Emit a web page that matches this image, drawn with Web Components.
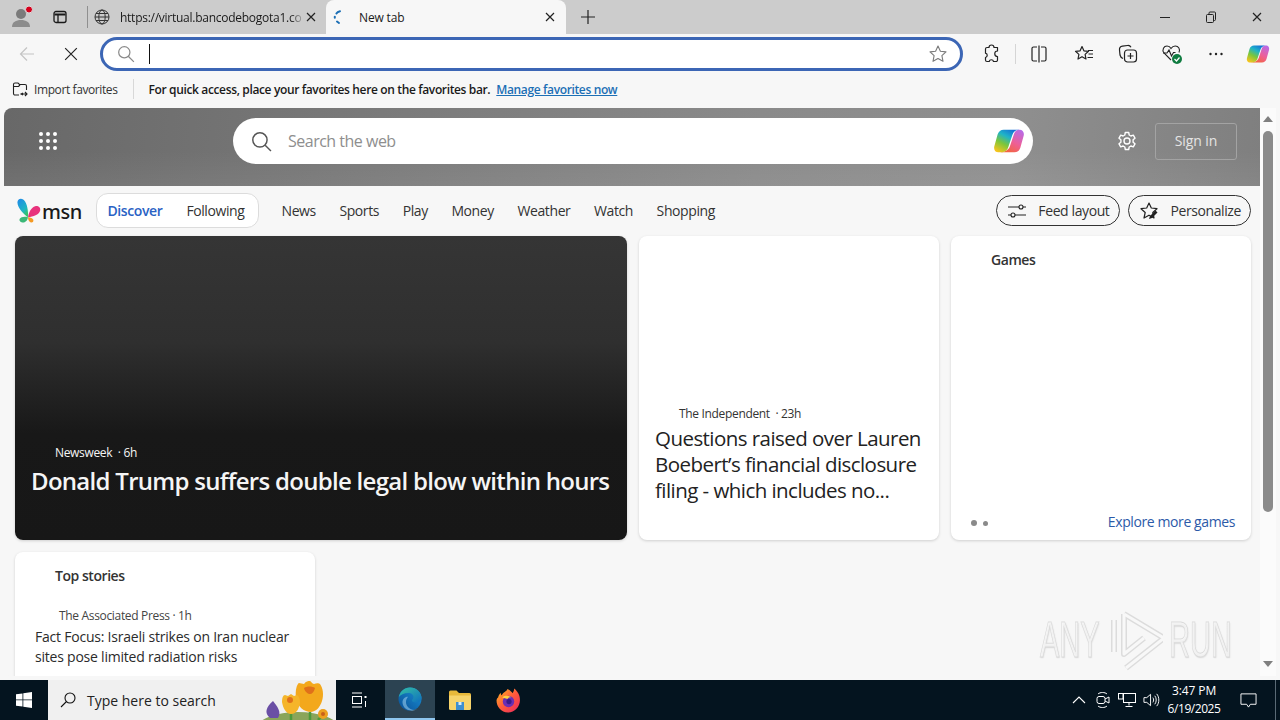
<!DOCTYPE html>
<html lang="en">
<head>
<meta charset="utf-8">
<title>New tab</title>
<style>
  html, body { margin: 0; height: 100%; overflow: hidden; background: #f7f7f7; }
  body { font-family: "Open Sans", "Noto Sans", sans-serif; display: flex; flex-direction: column; width: 1280px; height: 720px; position: relative; }
</style>
</head>
<body>
<browser-tabs></browser-tabs>
<browser-toolbar></browser-toolbar>
<browser-favbar></browser-favbar>
<page-view>
  <msn-header></msn-header>
  <msn-nav></msn-nav>
  <msn-feed></msn-feed>
</page-view>
<win-taskbar></win-taskbar>
<run-watermark></run-watermark>

<script>
const COPILOT = `
  <defs>
    <linearGradient id="c1" x1=".8" y1="0" x2=".2" y2="1"><stop offset="0" stop-color="#1368d8"/><stop offset=".35" stop-color="#1fb4c8"/><stop offset=".65" stop-color="#7cc63a"/><stop offset="1" stop-color="#f6c41e"/></linearGradient>
    <linearGradient id="c2" x1=".8" y1="0" x2=".2" y2="1"><stop offset="0" stop-color="#b96ae6"/><stop offset=".5" stop-color="#ee5f96"/><stop offset="1" stop-color="#f4662e"/></linearGradient>
  </defs>
  <path fill="url(#c2)" d="M20 3.500C22.200 3.500 23.700 5.500 23 8L20.500 17C19.800 19.200 18.200 20.500 16 20.500H4C7.500 20.500 11 19.500 12.500 16.500L15.500 7.500C16.300 5 17.500 3.500 20 3.500z"/>
  <path fill="url(#c1)" d="M8 3.500H20C18 3.500 15.500 4.500 14.500 7.500L11.500 16.500C10.800 19 8.500 20.500 6 20.500H4C1.800 20.500 .3 18.500 1 16L3.500 7C4.200 4.800 5.800 3.500 8 3.500z"/>`;

const ICONS = {
  profile: `<svg viewBox="0 0 24 24" width="24" height="24"><circle cx="11" cy="9" r="5" fill="#7b7b7b"/><path d="M2 22c0-5 4-7 9-7s9 2 9 7z" fill="#8c8c8c"/><circle cx="19" cy="4.500" r="3.500" fill="#d6001c" stroke="#ddd" stroke-width="1"/></svg>`,
  tabs: `<svg viewBox="0 0 16 16" width="16" height="16" fill="none" stroke="#1a1a1a" stroke-width="1.300"><rect x="2" y="2.500" width="12" height="11" rx="2"/><path d="M2.500 5.500h11" stroke-width="2"/><path d="M6 6v7"/></svg>`,
  globe: `<svg viewBox="0 0 16 16" width="16" height="16" fill="none" stroke="#333" stroke-width="1"><circle cx="8" cy="8" r="7"/><ellipse cx="8" cy="8" rx="3.200" ry="7"/><path d="M1 8h14M2 4.500h12M2 11.500h12"/></svg>`,
  close: `<svg viewBox="0 0 12 12" width="12" height="12" fill="none" stroke="#222" stroke-width="1.200"><path d="M2 2l8 8M10 2l-8 8"/></svg>`,
  spinner: `<svg viewBox="0 0 16 16" width="16" height="16" fill="none" stroke="#1c6fb5" stroke-width="2" stroke-linecap="round"><path d="M10 2.200C8 2.600 7 3.400 6.400 4.400"/><path d="M4.800 7.800v1"/><path d="M7 12.500l2 1.500"/></svg>`,
  plus: `<svg viewBox="0 0 16 16" width="16" height="16" fill="none" stroke="#222" stroke-width="1.200"><path d="M8 1v14M1 8h14"/></svg>`,
  min: `<svg viewBox="0 0 12 12" width="12" height="12" fill="none" stroke="#222"><path d="M1 6.500h10"/></svg>`,
  restore: `<svg viewBox="0 0 12 12" width="12" height="12" fill="none" stroke="#222"><rect x="1.500" y="3.500" width="7" height="8" rx="1"/><path d="M4 3.500V2a1 1 0 0 1 1-1h4.500a1 1 0 0 1 1 1v6.500a1 1 0 0 1-1 1h-1"/></svg>`,
  back: `<svg viewBox="0 0 16 16" width="16" height="16" fill="none" stroke="#c4c4c4" stroke-width="1.200"><path d="M15 8H1.500M8 1.500L1.500 8 8 14.500"/></svg>`,
  stop: `<svg viewBox="0 0 12 12" width="14" height="14" fill="none" stroke="#222" stroke-width="1"><path d="M1 1l10 10M11 1L1 11"/></svg>`,
  search: `<svg viewBox="0 0 16 16" width="18" height="18" fill="none" stroke="#8a8a8a" stroke-width="1.100"><circle cx="6.500" cy="6.500" r="5"/><path d="M10 10l5 5"/></svg>`,
  star: `<svg viewBox="0 0 20 20" width="20" height="20" fill="none" stroke="#7a7a7a" stroke-width="1.100" stroke-linejoin="round"><path d="M10 2l2.400 5.200 5.600.7-4.100 3.800 1.100 5.600L10 14.500l-5 2.800 1.100-5.600L2 7.900l5.600-.7z"/></svg>`,
  puzzle: `<svg viewBox="0 0 20 20" width="20" height="20" fill="none" stroke="#222" stroke-width="1.200" stroke-linejoin="round"><path d="M7 3.500a2.500 2.500 0 0 1 5 0h3.500V7a2.500 2.500 0 0 0 0 5.500V16a1.500 1.500 0 0 1-1.500 1.500h-2.500a2.200 2.200 0 0 0-4.300 0H5A1.500 1.500 0 0 1 3.500 16v-2.500a2.200 2.200 0 0 0 0-4.300V5A1.500 1.500 0 0 1 5 3.500z"/></svg>`,
  split: `<svg viewBox="0 0 20 20" width="20" height="20" fill="none" stroke="#222" stroke-width="1.200"><path d="M8 3H4.500A1.500 1.500 0 0 0 3 4.500v11A1.500 1.500 0 0 0 4.500 17H8M12 3h3.500A1.500 1.500 0 0 1 17 4.500v11a1.500 1.500 0 0 1-1.500 1.500H12M10 1.500v17"/></svg>`,
  favs: `<svg viewBox="0 0 20 20" width="20" height="20" fill="none" stroke="#222" stroke-width="1.200" stroke-linejoin="round"><path d="M8 2.500l1.900 4.300 4.600.5-3.400 3.100.9 4.600L8 12.700 4 15l.9-4.600L1.500 7.300l4.600-.5zM14 6.500h5M14.500 10h4.500M13.500 13.500h5.500"/></svg>`,
  collections: `<svg viewBox="0 0 20 20" width="20" height="20" fill="none" stroke="#222" stroke-width="1.200"><path d="M5 14.500c-1.500-.5-2.500-1.500-3-3.500L1.500 6C1.300 4 2.500 2.500 4.500 2.200l5-.7c1.500-.2 2.800.5 3.500 1.800"/><rect x="6.500" y="6" width="12" height="12" rx="3"/><path d="M12.500 9v6M9.500 12h6"/></svg>`,
  health: `<svg viewBox="0 0 22 22" width="22" height="22" fill="none" stroke="#222" stroke-width="1.100"><path d="M10 17L3 10C.5 6.500 3 3 6 3c2 0 3.200 1 4 2.500C11 4 12.200 3 14.200 3 17.500 3 19.500 6 18 9.500"/><path d="M2 10h4l2-3 2.500 6 2-3.500h2"/><circle cx="16" cy="16" r="5" fill="#107c41" stroke="none"/><path d="M13.500 16l2 2 3-3.500" stroke="#fff" stroke-width="1.200"/></svg>`,
  more: `<svg viewBox="0 0 16 16" width="16" height="16" fill="#222"><circle cx="2.500" cy="8" r="1.200"/><circle cx="8" cy="8" r="1.200"/><circle cx="13.500" cy="8" r="1.200"/></svg>`,
  copilot: `<svg viewBox="0 0 24 24" width="24" height="24">${COPILOT}</svg>`,
  copilotBig: `<svg viewBox="0 0 24 24" width="32" height="32">${COPILOT}</svg>`,
  imports: `<svg viewBox="0 0 16 16" width="16" height="16" fill="none" stroke="#222" stroke-width="1.100"><path d="M7 14H3a1.500 1.500 0 0 1-1.500-1.500v-9A1.500 1.500 0 0 1 3 2h3l1.500 1.500H13A1.500 1.500 0 0 1 14.500 5v4"/><path d="M1.500 5.500h5L8 4M9 13h6M13 11l2 2-2 2M11 12l-2 1 2 1"/></svg>`,
  apps: `<svg viewBox="0 0 20 20" width="20" height="20" fill="#fff"><circle cx="3" cy="3" r="2"/><circle cx="10" cy="3" r="2"/><circle cx="17" cy="3" r="2"/><circle cx="3" cy="10" r="2"/><circle cx="10" cy="10" r="2"/><circle cx="17" cy="10" r="2"/><circle cx="3" cy="17" r="2"/><circle cx="10" cy="17" r="2"/><circle cx="17" cy="17" r="2"/></svg>`,
  bigsearch: `<svg viewBox="0 0 20 20" width="21" height="21" fill="none" stroke="#555" stroke-width="1.400"><circle cx="8.500" cy="8.500" r="6.800"/><path d="M13.500 13.500l5.500 5.500"/></svg>`,
  gear: `<svg viewBox="0 0 20 20" width="20" height="20" fill="none" stroke="#fff" stroke-width="1.400" stroke-linejoin="round"><circle cx="10" cy="10" r="3"/><path d="M8.300 1.500h3.400l.5 2.500 1.700 1 2.400-.8 1.700 3-1.900 1.600v2.400l1.900 1.600-1.700 3-2.400-.8-1.700 1-.5 2.500H8.300l-.5-2.500-1.700-1-2.400.8-1.700-3 1.900-1.600V8.800L2 7.200l1.700-3 2.400.8 1.700-1z"/></svg>`,
  sliders: `<svg viewBox="0 0 20 20" width="20" height="20" fill="none" stroke="#222" stroke-width="1.100"><path d="M1 6h11M16 6h3M1 14h3M8 14h11"/><circle cx="14" cy="6" r="2"/><circle cx="6" cy="14" r="2"/></svg>`,
  personalize: `<svg viewBox="0 0 20 20" width="20" height="20" fill="none" stroke="#222" stroke-width="1.200" stroke-linejoin="round"><path d="M10 2l2.300 5 5.700.7-4.200 3.800 1.200 5.500-5-2.800-5 2.800 1.200-5.500L2 7.700 7.700 7z"/><path d="M10 18l1-3 5.500-5.500 2 2L13 17z" fill="#222" stroke="none"/></svg>`,
  msn: `<svg viewBox="0 0 26 26" width="25" height="25"><defs><linearGradient id="m1" x1="0" y1="0" x2=".6" y2="1"><stop offset="0" stop-color="#1f86ea"/><stop offset=".7" stop-color="#1fb5c4"/><stop offset="1" stop-color="#35c46a"/></linearGradient></defs><path d="M12.500 20C8 17 2 11 1.500 5 1.200 1.500 4.500-.5 7.500 1.500c3.500 2.500 5.500 10 5 18.500z" fill="url(#m1)"/><path d="M12.500 20c.5-5 3.500-10.500 7.500-11.500 3.500-.8 6 1.800 5 5-1.200 3.800-7 6-12.500 6.500z" fill="#e8327c"/><path d="M12.500 20C9 19 5 19.500 3.800 21.800 3 24 5 25.500 7.500 25.500c2.500 0 4.500-2.500 5-5.500z" fill="#3cb878"/><path d="M12.500 20c0 2.500 1 5 3 5.500 1.800.4 3-1.200 2.500-2.800-.6-1.800-3-2.500-5.500-2.700z" fill="#f59a23"/></svg>`,
  win: `<svg viewBox="0 0 16 16" width="16" height="16" fill="#fff"><path d="M0 2.300l6.500-.9v6.100H0zM7.300 1.300L16 0v7.500H7.300zM0 8.300h6.500v6.200L0 13.700zM7.300 8.300H16V16l-8.700-1.200z"/></svg>`,
  lens: `<svg viewBox="0 0 16 16" width="16" height="16" fill="none" stroke="#111" stroke-width="1.100"><circle cx="10" cy="6" r="5"/><path d="M6.500 9.500L1 15"/></svg>`,
  taskview: `<svg viewBox="0 0 16 16" width="16" height="16" fill="none" stroke="#fff" stroke-width="1"><path d="M1 1h10M1 15h10"/><rect x="1.500" y="4.500" width="9" height="7"/><rect x="13.500" y="4" width="2" height="2" fill="#fff" stroke="none"/><path d="M14.500 9v6"/></svg>`,
  edge: `<svg viewBox="0 0 24 24" width="24" height="24"><defs><linearGradient id="e1" x1="0" y1="0" x2="1" y2="1"><stop offset="0" stop-color="#35c1a4"/><stop offset="1" stop-color="#0f6fbf"/></linearGradient><linearGradient id="e2" x1="0" y1="1" x2="1" y2="0"><stop offset="0" stop-color="#0a4f96"/><stop offset="1" stop-color="#1a93d8"/></linearGradient></defs><circle cx="12" cy="12" r="11.500" fill="url(#e2)"/><path d="M.8 10C2 4.500 6.500.5 12 .5c6.500 0 11.500 5 11.500 10.500 0 3-2.500 4.500-5.500 4.500-2.500 0-4-1-4-2 0-1 1.500-1.500 1.500-3.500 0-2.500-2.500-4-5-4-4.500 0-8 2-9.700 4z" fill="url(#e1)"/><path d="M11 23.300c-4-1-6.500-4.500-6.500-8 0-3 2-5.500 5.500-5.500-1.500 2-2 3.500-2 5.500 0 3 2.500 6.500 6.500 7.500 3 .5 5-1 5.500-1.500-2 2-5.500 3-8.500 2z" fill="#bfe8ff" opacity=".45"/></svg>`,
  folder: `<svg viewBox="0 0 24 22" width="24" height="22"><path d="M1 3a1.500 1.500 0 0 1 1.500-1.500h6L11 4h10.500A1.500 1.500 0 0 1 23 5.500V7H1z" fill="#e8b93a"/><path d="M1 6.500h22v13a1.500 1.500 0 0 1-1.500 1.500h-19A1.500 1.500 0 0 1 1 19.500z" fill="#f7d46b"/><path d="M8 13h8v8H8z" fill="#3f8fd0"/><path d="M10.500 13h3v3h-3z" fill="#d9edf9"/></svg>`,
  firefox: `<svg viewBox="0 0 24 24" width="25" height="25"><defs><linearGradient id="f1" x1="0" y1="0" x2="1" y2="1"><stop offset="0" stop-color="#ffbb1f"/><stop offset=".5" stop-color="#ff5a3c"/><stop offset="1" stop-color="#e8265f"/></linearGradient></defs><path d="M2 9c.5-2 1.500-3.500 2.500-4.500 0 1.200.4 2 1 2.500C7 4 10 3.500 11 1c3 1.500 4 3 5 4 1-1.500 1.500-3 1.500-4.500 3 2.500 5.500 6 5.500 11 0 6.500-5 12-11.500 12S.5 18 .5 12C.5 11 1.200 9.500 2 9z" fill="url(#f1)"/><circle cx="12" cy="13" r="5.500" fill="#6b2fb3"/><circle cx="12.500" cy="13" r="2.500" fill="#3b1a8a"/><path d="M6 9c3-2.500 7-1.500 9 0-2-.5-3 0-4 1.500z" fill="#ffd23f"/></svg>`,
  flowers: `<svg viewBox="0 0 78 40" width="78" height="40"><ellipse cx="40" cy="47" rx="40" ry="15" fill="#8aa55a"/><path d="M52 32V40M33 34v6M60 40l4-4" stroke="#4d9a3a" stroke-width="2.500" fill="none"/><path d="M12 38C6 33 8 27 15 21c4 5 9 11 5 17z" fill="#6a4fa5"/><path d="M38 18c-1-8 1-14 3-15 1 0 4 1 5 1 2-3 4-3 6-3 1 0 2 3 4 3 2-1 5-1 6 0 3 4 4 11 2 17-2 6-5 10-11 11-7 0-13-5-15-14z" fill="#f3a81c"/><path d="M24 22c0-4 1-7 3-7l3 1 3-2 3 2 3-1c2 1 3 4 3 8-1 5-3 11-9 11-5 0-8-6-9-12z" fill="#f5b52a"/><path d="M46 8c3-2 8-2 11 0-1 4-3 6-5 6s-5-2-6-6z" fill="#e0701a"/><circle cx="32" cy="20" r="3" fill="#e0701a"/><circle cx="65" cy="34" r="5" fill="#eda01e"/><circle cx="65" cy="34" r="2" fill="#c9601a"/></svg>`,
  chevron: `<svg viewBox="0 0 16 16" width="16" height="16" fill="none" stroke="#fff" stroke-width="1.100"><path d="M2 11l6-6 6 6"/></svg>`,
  meet: `<svg viewBox="0 0 16 18" width="16" height="18" fill="none" stroke="#fff" stroke-width="1"><rect x="2" y="5.500" width="8" height="7" rx="2"/><path d="M10 8l4-2v6l-4-2M3 3c2-2 7-2 9 0M3 15c2 2 7 2 9 0"/></svg>`,
  network: `<svg viewBox="0 0 18 16" width="18" height="16" fill="none" stroke="#fff" stroke-width="1"><rect x="5.500" y="1.500" width="12" height="9"/><path d="M11 10.500v3M7.500 14.500h7"/><rect x=".5" y="1.500" width="4.500" height="5.500" fill="#04141f"/></svg>`,
  volume: `<svg viewBox="0 0 18 16" width="17" height="16" fill="none" stroke="#fff" stroke-width="1"><path d="M1 5.500h3L8 2v12l-4-3.500H1zM10.500 5.500c1 1.500 1 3.500 0 5M12.500 3.500c2 2.500 2 6.500 0 9M14.500 1.500c3 3.500 3 9.500 0 13"/></svg>`,
  notify: `<svg viewBox="0 0 18 18" width="17" height="17" fill="none" stroke="#fff" stroke-width="1"><path d="M1 2h16v11h-6l-2 3-2-3H1z"/></svg>`
};

// Icono en línea; el nombre viene del diccionario de arriba
class UiIcon extends HTMLElement {
  connectedCallback() {
    this.attachShadow({ mode: "open" });
    this.shadowRoot.innerHTML = `<style>:host{display:inline-flex;align-items:center;justify-content:center;flex:none}svg{display:block}</style>${ICONS[this.getAttribute("name")] || ""}`;
  }
}
customElements.define("ui-icon", UiIcon);

class ShellElement extends HTMLElement {
  connectedCallback() {
    this.attachShadow({ mode: "open" });
    this.shadowRoot.innerHTML = `<style>${this.css()}</style>${this.html()}`;
  }
}

class BrowserTabs extends ShellElement {
  css() {
    return `
      :host { display: flex; height: 34px; flex: none; background: #cccccc; font-size: 12px; color: #1a1a1a; letter-spacing: -.15px; }
      .btn { display: flex; align-items: center; justify-content: center; }
      .sep { width: 1px; height: 22px; background: #8f8f8f; align-self: center; margin-left: 11px; }
      .tab { display: flex; align-items: center; box-sizing: border-box; }
      .t1 { width: 238px; padding: 0 9px 0 6px; }
      .t1 span { flex: 1; margin-left: 10px; white-space: nowrap; letter-spacing: -.26px; -webkit-mask-image: linear-gradient(90deg,#000 92%,transparent); }
      .t2 { width: 240px; background: #f7f7f7; border-radius: 8px 8px 0 0; padding: 0 10px 0 4px; }
      .t2 span { flex: 1; margin-left: 13px; }
      .controls { margin-left: auto; display: flex; }
      .controls .btn { width: 46px; }
    `;
  }
  html() {
    return `
      <div class="btn" style="width:44px"><ui-icon name="profile"></ui-icon></div>
      <div class="btn" style="width:32px"><ui-icon name="tabs"></ui-icon></div>
      <div class="sep"></div>
      <div class="tab t1"><ui-icon name="globe"></ui-icon><span>https://virtual.bancodebogota1.co</span><ui-icon name="close"></ui-icon></div>
      <div class="tab t2"><ui-icon name="spinner"></ui-icon><span>New tab</span><ui-icon name="close"></ui-icon></div>
      <div class="btn" style="width:44px"><ui-icon name="plus"></ui-icon></div>
      <div class="controls">
        <div class="btn"><ui-icon name="min"></ui-icon></div>
        <div class="btn"><ui-icon name="restore"></ui-icon></div>
        <div class="btn"><ui-icon name="close"></ui-icon></div>
      </div>
    `;
  }
}
customElements.define("browser-tabs", BrowserTabs);

class BrowserToolbar extends ShellElement {
  css() {
    return `
      :host { display: flex; align-items: center; height: 40px; flex: none; background: #f7f7f7; padding-left: 5px; }
      .btn { width: 44px; height: 34px; display: flex; align-items: center; justify-content: center; flex: none; }
      .addr { box-sizing: border-box; width: 863px; height: 34px; margin: 0 7px 0 7px; border: 3px solid #3c66b5; border-radius: 17px; background: #fff; display: flex; align-items: center; padding: 0 12px 0 14px; flex: none; }
      .caret { width: 1px; height: 20px; background: #111; margin-left: 14px; }
      .fill { flex: 1; }
      .sep { width: 1px; height: 20px; background: #d5d5d5; margin: 0 1px; flex: none; }
    `;
  }
  html() {
    return `
      <div class="btn"><ui-icon name="back"></ui-icon></div>
      <div class="btn"><ui-icon name="stop"></ui-icon></div>
      <div class="addr"><ui-icon name="search"></ui-icon><div class="caret"></div><div class="fill"></div><ui-icon name="star"></ui-icon></div>
      <div class="btn"><ui-icon name="puzzle"></ui-icon></div>
      <div class="sep"></div>
      <div class="btn"><ui-icon name="split"></ui-icon></div>
      <div class="btn" style="margin-left:1px"><ui-icon name="favs"></ui-icon></div>
      <div class="btn"><ui-icon name="collections"></ui-icon></div>
      <div class="btn"><ui-icon name="health"></ui-icon></div>
      <div class="btn"><ui-icon name="more"></ui-icon></div>
      <div class="btn" style="width:39px"><ui-icon name="copilot"></ui-icon></div>
    `;
  }
}
customElements.define("browser-toolbar", BrowserToolbar);

class BrowserFavbar extends ShellElement {
  css() {
    return `
      :host { display: flex; align-items: center; height: 34px; box-sizing: border-box; padding: 0 0 4px 12px; flex: none; background: #f7f7f7; font-size: 12px; color: #1a1a1a; letter-spacing: -.4px; white-space: nowrap; }
      .imp { margin-left: 6px; color: #333; }
      .sep { width: 1px; height: 20px; background: #d8d8d8; margin: 0 15px 0 15px; }
      b { font-weight: 600; letter-spacing: -.36px; }
      a { margin-left: 6px; color: #1c6fb5; text-decoration: underline; font-weight: 600; letter-spacing: -.36px; }
    `;
  }
  html() {
    return `
      <ui-icon name="imports"></ui-icon><span class="imp">Import favorites</span><div class="sep"></div>
      <b>For quick access, place your favorites here on the favorites bar.</b><a>Manage favorites now</a>
    `;
  }
}
customElements.define("browser-favbar", BrowserFavbar);

// Marco de la página con su barra de desplazamiento
class PageView extends ShellElement {
  css() {
    return `
      :host { display: flex; height: 568px; flex: none; padding-left: 4px; overflow: hidden; }
      .page { width: 1256px; height: 568px; overflow: hidden; background: #f7f7f7; border-radius: 8px 0 0 8px; flex: none; }
      .bar { width: 16px; background: #fbfbfb; flex: none; display: flex; flex-direction: column; align-items: center; padding: 8px 0 9px; box-sizing: border-box; }
      .up, .down { width: 0; height: 0; border-left: 5px solid transparent; border-right: 5px solid transparent; }
      .up { border-bottom: 6px solid #808080; }
      .down { border-top: 6px solid #808080; margin-top: auto; }
      .thumb { width: 10px; height: 381px; background: #8b8b8b; border-radius: 5px; margin-top: 9px; }
    `;
  }
  html() {
    return `
      <div class="page"><slot></slot></div>
      <div class="bar"><div class="up"></div><div class="thumb"></div><div class="down"></div></div>
    `;
  }
}
customElements.define("page-view", PageView);

class MsnHeader extends ShellElement {
  css() {
    return `
      :host { display: flex; align-items: center; height: 78px; box-sizing: border-box; padding: 0 23px 12px 0;
        background: linear-gradient(180deg, rgba(255,255,255,0) 55%, rgba(255,255,255,.06)), linear-gradient(95deg, #686868 0%, #7a7a7a 30%, #8a8a8a 60%, #8f8f8f 80%, #7f7f7f 100%); font-size: 14px; }
      .apps { width: 229px; padding-left: 34px; box-sizing: border-box; flex: none; display: flex; }
      .search { width: 800px; height: 46px; border-radius: 23px; background: #fff; display: flex; align-items: center; padding: 0 8px 0 18px; box-sizing: border-box; flex: none; }
      .search span { flex: 1; margin-left: 16px; font-size: 16px; color: #8e8e8e; letter-spacing: -.5px; }
      .gear { margin-left: 84px; }
      .sign { margin-left: 18px; width: 83px; height: 37px; box-sizing: border-box; border: 1px solid #a3a3a3; border-radius: 3px; display: flex; align-items: center; justify-content: center; padding-bottom: 2px; color: #e4e4e4; letter-spacing: -.1px; }
    `;
  }
  html() {
    return `
      <div class="apps"><ui-icon name="apps"></ui-icon></div>
      <div class="search"><ui-icon name="bigsearch"></ui-icon><span>Search the web</span><ui-icon name="copilotBig"></ui-icon></div>
      <ui-icon class="gear" name="gear"></ui-icon>
      <div class="sign">Sign in</div>
    `;
  }
}
customElements.define("msn-header", MsnHeader);

class MsnNav extends ShellElement {
  css() {
    return `
      :host { display: flex; align-items: center; height: 50px; box-sizing: border-box; padding: 0 9px 1px 12px; font-size: 14px; color: #333; letter-spacing: -.4px; white-space: nowrap; }
      .logo { display: flex; align-items: center; width: 79.500px; flex: none; box-sizing: border-box; }
      .logo span { font-family: "Noto Sans", sans-serif; font-size: 20px; font-weight: 500; color: #1a1a1a; letter-spacing: -.4px; margin-left: 1px; line-height: 1; padding-top: 3px; }
      .pill { display: flex; align-items: center; gap: 24px; height: 35px; box-sizing: border-box; padding: 0 14px 0 11px; border: 1px solid #dcdcdc; border-radius: 12px; background: #fff; flex: none; }
      .on { color: #2a62c4; font-weight: 600; }
      .links { display: flex; gap: 23.600px; margin-left: 22px; }
      .right { margin-left: auto; display: flex; gap: 8px; }
      .chip { display: flex; align-items: center; height: 31px; box-sizing: border-box; border: 1px solid #333; border-radius: 16px; padding: 0 10px; gap: 11px; }
      .chip:last-child { padding-right: 9px; }
    `;
  }
  html() {
    const links = ["News", "Sports", "Play", "Money", "Weather", "Watch", "Shopping"];
    return `
      <div class="logo"><ui-icon name="msn"></ui-icon><span>msn</span></div>
      <div class="pill"><span class="on">Discover</span><span>Following</span></div>
      <div class="links">${links.map((l) => `<span>${l}</span>`).join("")}</div>
      <div class="right">
        <div class="chip"><ui-icon name="sliders"></ui-icon>Feed layout</div>
        <div class="chip"><ui-icon name="personalize"></ui-icon>Personalize</div>
      </div>
    `;
  }
}
customElements.define("msn-nav", MsnNav);

class MsnFeed extends ShellElement {
  css() {
    return `
      :host { display: grid; grid-template-columns: 612px 300px 300px; grid-auto-rows: 304px; gap: 12px; padding-left: 11px; font-size: 12px; letter-spacing: -.33px; }
      .card { background: #fff; border-radius: 8px; box-shadow: 0 1px 3px rgba(0,0,0,.16); box-sizing: border-box; display: flex; flex-direction: column; color: #333; }
      .hero { background: linear-gradient(180deg, #353535 0%, #2f2f2f 35%, #181818 65%, #171717 100%); color: #f5f5f5; padding: 0 16px 42px; justify-content: flex-end; }
      .hero .src { padding-left: 24px; margin-bottom: 3px; }
      .hero h2 { margin: 0; font-size: 24px; line-height: 34px; font-weight: 600; letter-spacing: -.71px; white-space: nowrap; }
      .story { padding: 0 16px 37px; justify-content: flex-end; }
      .story .src { padding-left: 24px; margin-bottom: 3px; }
      .story h3 { margin: 0; font-size: 20.500px; line-height: 26px; font-weight: 500; letter-spacing: -.55px; color: #222; }
      .games { padding: 14px 16px 9px 20px; justify-content: space-between; }
      .games b { padding-left: 20px; font-size: 14px; font-weight: 600; letter-spacing: -.45px; }
      .foot { display: flex; align-items: center; font-size: 14px; color: #2c5aa8; letter-spacing: -.4px; }
      .dot { width: 6px; height: 6px; border-radius: 50%; background: #8a8a8a; margin: 3px 6px 0 0; }
      .dot + .dot { width: 5px; height: 5px; }
      .foot a { margin-left: auto; }
      .top { padding: 14px 20px; width: 300px; }
      .top b { padding-left: 20px; font-size: 14px; font-weight: 600; letter-spacing: -.45px; }
      .top .src { padding-left: 24px; margin-top: 22px; color: #444; }
      .top p { margin: 3px 0 0; font-size: 14px; line-height: 20px; font-weight: 500; color: #2b2b2b; letter-spacing: -.22px; }
    `;
  }
  html() {
    return `
      <div class="card hero">
        <div class="src">Newsweek &nbsp;· 6h</div>
        <h2>Donald Trump suffers double legal blow within hours</h2>
      </div>
      <div class="card story">
        <div class="src">The Independent &nbsp;· 23h</div>
        <h3>Questions raised over Lauren Boebert’s financial disclosure filing - which includes no...</h3>
      </div>
      <div class="card games">
        <b>Games</b>
        <div class="foot"><i class="dot"></i><i class="dot"></i><a>Explore more games</a></div>
      </div>
      <div class="card top">
        <b>Top stories</b>
        <div class="src">The Associated Press · 1h</div>
        <p>Fact Focus: Israeli strikes on Iran nuclear sites pose limited radiation risks</p>
      </div>
    `;
  }
}
customElements.define("msn-feed", MsnFeed);

class WinTaskbar extends ShellElement {
  css() {
    return `
      :host { display: flex; align-items: stretch; height: 40px; margin-top: 4px; flex: none; background: #04141f; color: #fff; font-size: 12px; }
      .cell { display: flex; align-items: center; justify-content: center; flex: none; }
      .search { width: 288px; background: #f0f0f0; color: #222; display: flex; align-items: center; padding-left: 12px; box-sizing: border-box; font-size: 14px; position: relative; overflow: hidden; }
      .search span { margin-left: 11px; }
      .search .fl { position: absolute; right: 0; bottom: 0; }
      .active { background: #2c4352; border-bottom: 2px solid #8fc6ee; box-sizing: border-box; }
      .tray { margin-left: auto; display: flex; align-items: center; }
      .clock { width: 62px; text-align: center; line-height: 18px; letter-spacing: -.1px; margin-right: 1px; white-space: nowrap; }
      .clock .d { letter-spacing: -.45px; }
      .endline { width: 1px; background: #5a6a75; margin: 0 4px 0 5px; height: 100%; }
    `;
  }
  html() {
    return `
      <div class="cell" style="width:48px"><ui-icon name="win"></ui-icon></div>
      <div class="search"><ui-icon name="lens"></ui-icon><span>Type here to search</span><ui-icon class="fl" name="flowers"></ui-icon></div>
      <div class="cell" style="width:49px;padding-right:4px;box-sizing:border-box"><ui-icon name="taskview"></ui-icon></div>
      <div class="cell active" style="width:50px"><ui-icon name="edge"></ui-icon></div>
      <div class="cell" style="width:49px"><ui-icon name="folder"></ui-icon></div>
      <div class="cell" style="width:49px"><ui-icon name="firefox"></ui-icon></div>
      <div class="tray">
        <div class="cell" style="width:24px"><ui-icon name="chevron"></ui-icon></div>
        <div class="cell" style="width:24px"><ui-icon name="meet"></ui-icon></div>
        <div class="cell" style="width:24px"><ui-icon name="network"></ui-icon></div>
        <div class="cell" style="width:24px"><ui-icon name="volume"></ui-icon></div>
        <div class="cell clock"><div>3:47 PM<br><span class="d">6/19/2025</span></div></div>
        <div class="cell" style="width:44px"><ui-icon name="notify"></ui-icon></div>
        <div class="endline"></div>
      </div>
    `;
  }
}
customElements.define("win-taskbar", WinTaskbar);

// Marca de agua: va encima de la página
class RunWatermark extends ShellElement {
  css() {
    return `
      :host { position: absolute; left: 1040px; top: 608px; display: flex; align-items: center; pointer-events: none; font-family: "Liberation Sans", sans-serif; font-size: 50px; color: rgba(255,255,255,.6); -webkit-text-stroke: 1px rgba(215,215,215,.9); text-shadow: 1px 1px 2px rgba(0,0,0,.12); line-height: 64px; }
      span { display: block; width: 62px; transform-origin: left center; transform: scaleX(.58); }
      svg { margin: 0 6px 0 1px; flex: none; }
    `;
  }
  html() {
    return `<span>ANY</span><svg viewBox="0 0 60 64" width="60" height="64" fill="none" stroke-linejoin="round"><g stroke="#dcdcdc" stroke-width="6"><path d="M11 12v32M21 6l40 24-38 30"/><path d="M21 6v40l20-16"/></g><g stroke="#f8f8f8" stroke-width="3"><path d="M11 12v32M21 6l40 24-38 30"/><path d="M21 6v40l20-16"/></g></svg><span>RUN</span>`;
  }
}
customElements.define("run-watermark", RunWatermark);
</script>
</body>
</html>
